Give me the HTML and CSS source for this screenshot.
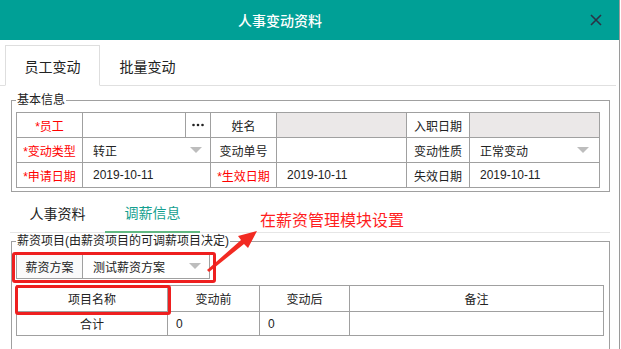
FILE: index.html
```html
<!DOCTYPE html>
<html lang="zh">
<head>
<meta charset="utf-8">
<title>人事变动资料</title>
<link rel="stylesheet" href="styles.css">
</head>
<body>
<div class="dialog">
  <div class="header">
    <span class="title">人事变动资料</span>
    <svg class="close" width="12" height="12" viewBox="0 0 12 12"><path d="M1 1L11 11M11 1L1 11" stroke="#2b3346" stroke-width="1.6" fill="none"/></svg>
  </div>
  <div class="tabs">
    <div class="tab active">员工变动</div>
    <div class="tab">批量变动</div>
  </div>
  <fieldset class="group g1">
    <legend>基本信息</legend>
    <table class="grid info">
      <colgroup>
        <col style="width:66px"><col style="width:103px"><col style="width:25px"><col style="width:66px"><col style="width:130px"><col style="width:63px"><col style="width:130px">
      </colgroup>
      <tr>
        <td class="lbl req">*员工</td>
        <td></td>
        <td class="dots"><svg width="12" height="4" viewBox="0 0 12 4"><circle cx="1.5" cy="2" r="1.3" fill="#222"/><circle cx="6" cy="2" r="1.3" fill="#222"/><circle cx="10.5" cy="2" r="1.3" fill="#222"/></svg></td>
        <td class="lbl">姓名</td>
        <td class="ro"></td>
        <td class="lbl">入职日期</td>
        <td class="ro"></td>
      </tr>
      <tr>
        <td class="lbl req">*变动类型</td>
        <td colspan="2"><div class="sel sel-a">转正<i class="caret"></i></div></td>
        <td class="lbl">变动单号</td>
        <td></td>
        <td class="lbl">变动性质</td>
        <td><div class="sel">正常变动<i class="caret"></i></div></td>
      </tr>
      <tr>
        <td class="lbl req">*申请日期</td>
        <td colspan="2" class="val">2019-10-11</td>
        <td class="lbl req">*生效日期</td>
        <td class="val">2019-10-11</td>
        <td class="lbl">失效日期</td>
        <td class="val">2019-10-11</td>
      </tr>
    </table>
  </fieldset>
  <div class="subtabs">
    <div class="subtab">人事资料</div>
    <div class="subtab on">调薪信息</div>
  </div>
  <fieldset class="group g2">
    <legend>薪资项目(由薪资项目的可调薪项目决定)</legend>
    <div class="scheme">
      <span class="scheme-lbl">薪资方案</span>
      <span class="scheme-sel">测试薪资方案<i class="caret"></i></span>
    </div>
    <table class="grid items">
      <colgroup>
        <col style="width:151px"><col style="width:92px"><col style="width:90px"><col style="width:254px">
      </colgroup>
      <tr class="head">
        <td>项目名称</td><td>变动前</td><td>变动后</td><td>备注</td>
      </tr>
      <tr>
        <td class="c">合计</td><td class="num">0</td><td class="num">0</td><td></td>
      </tr>
    </table>
  </fieldset>

  <div class="note">在薪资管理模块设置</div>
  <svg class="arrow" width="621" height="349" viewBox="0 0 621 349"><polygon points="207,270 241,240 238,236 257,231 248,248 244,244 209,272" fill="#f22a22"/></svg>
  <div class="mark mark1"></div>
  <div class="mark mark2"></div>
</div>
</body>
</html>
```
FILE: styles.css
```css
html, body {
  margin: 0;
  padding: 0;
  background: #fff;
}
body {
  width: 621px;
  height: 349px;
  overflow: hidden;
  font-family: "Liberation Sans", "Noto Sans CJK SC", sans-serif;
  font-size: 12px;
  color: #222;
}
.dialog {
  position: relative;
  width: 619px;
  height: 349px;
  border-right: 1px solid #9a9a9a;
  overflow: hidden;
}
.header {
  height: 40px;
  background: #00a096;
  display: flex;
  align-items: center;
  color: #fff;
}
.title {
  margin-left: 238px;
  font-size: 14px;
  font-weight: 500;
  flex: 1;
}
.close {
  margin-right: 17px;
}
.tabs {
  display: flex;
  padding: 5px 0 0 5px;
  margin-right: 3px;
  border-bottom: 1px solid #e0e0e0;
}
.tab {
  box-sizing: border-box;
  width: 95px;
  height: 41px;
  margin-bottom: -1px;
  display: flex;
  align-items: center;
  justify-content: center;
  font-size: 14px;
  color: #222;
  border: 1px solid transparent;
}
.tab.active {
  border-color: #dedede;
  border-bottom-color: #fff;
  background: #fff;
}
.group {
  box-sizing: border-box;
  width: 599px;
  margin: 0 0 0 11px;
  border: 1px solid #a0a0a0;
  padding: 4px 0 3px 4px;
  min-width: 0;
}
.group legend {
  font-size: 12px;
  line-height: 16px;
  padding: 0 1px;
  margin-left: 0;
  color: #222;
}
.g1 {
  margin-top: 6px;
}
.grid {
  border-collapse: collapse;
  table-layout: fixed;
}
.grid td {
  border: 1px solid #a0a0a0;
  padding: 0;
  height: 24px;
  box-sizing: border-box;
  white-space: nowrap;
}
.info {
  width: 583px;
}
.info tr {
  height: 25px;
}
.lbl {
  text-align: center;
}
.req {
  color: #f00;
}
.ro {
  background: #ebe8e8;
}
.dots {
  text-align: center;
  line-height: 0;
}
.val {
  padding-left: 10px !important;
}
.sel {
  display: flex;
  align-items: center;
  justify-content: space-between;
  padding: 0 10px 0 10px;
}
.sel-a {
  padding-right: 8px;
}
.caret {
  width: 0;
  height: 0;
  border-left: 6px solid transparent;
  border-right: 6px solid transparent;
  border-top: 6px solid #bdbdbd;
}
.subtabs {
  display: flex;
  margin-left: 10px;
  width: 600px;
  height: 40px;
  border-bottom: 1px solid #e6e6e6;
}
.subtab {
  box-sizing: border-box;
  width: 95px;
  height: 41px;
  display: flex;
  align-items: center;
  justify-content: center;
  font-size: 14px;
  color: #222;
}
.subtab.on {
  color: #14a08f;
  border-bottom: 2px solid #62b983;
}
.g2 {
  padding-bottom: 30px;
}
.scheme {
  display: flex;
  width: 194px;
  height: 26px;
  box-sizing: border-box;
  border: 1px solid #a0a0a0;
}
.scheme-lbl {
  width: 65px;
  border-right: 1px solid #a0a0a0;
  display: flex;
  align-items: center;
  justify-content: center;
  background: #fafafa;
}
.scheme-sel {
  flex: 1;
  display: flex;
  align-items: center;
  justify-content: space-between;
  padding: 0 8px 0 10px;
}
.items {
  width: 587px;
  margin-top: 6px;
}
.items .head td {
  height: 26px;
  text-align: center;
}
.items .c {
  text-align: center;
}
.items .num {
  padding-left: 8px;
}
.note {
  position: absolute;
  left: 260px;
  top: 210px;
  font-size: 16px;
  line-height: 22px;
  color: #ff1f1f;
}
.arrow {
  position: absolute;
  left: 0;
  top: 0;
}
.mark {
  position: absolute;
  box-sizing: border-box;
  border: 3px solid #ee1f1f;
  border-radius: 3px;
}
.mark1 {
  left: 12px;
  top: 252px;
  width: 204px;
  height: 31px;
}
.mark2 {
  left: 15px;
  top: 285px;
  width: 156px;
  height: 30px;
}
```
